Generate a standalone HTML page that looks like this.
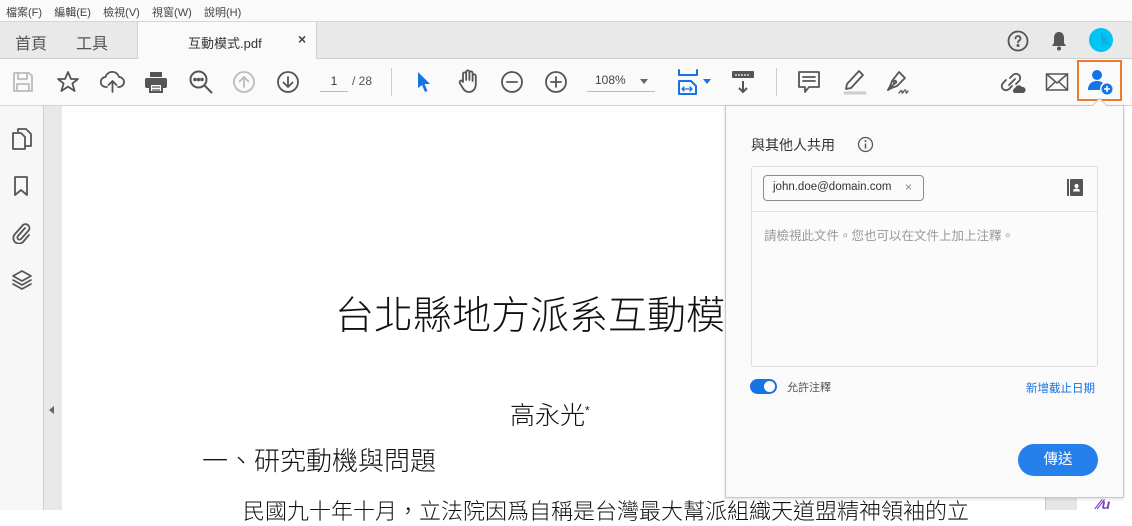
<!DOCTYPE html>
<html><head><meta charset="utf-8"><style>
*{margin:0;padding:0;box-sizing:border-box}
body{width:1132px;height:510px;overflow:hidden;background:#fff;font-family:"Liberation Sans","Noto Sans CJK TC",sans-serif;position:relative;color:#333}
.a{position:absolute}
svg.i{position:absolute;fill:none;stroke:#555;stroke-width:1.8;stroke-linecap:round;stroke-linejoin:round}
</style></head><body>
<!-- menu -->
<div class="a" style="left:0;top:0;width:1132px;height:22px;background:#fafafa;border-bottom:1px solid #d6d6d6"></div>
<div class="a" style="left:6px;top:4px;font-size:11px;color:#444;word-spacing:0">檔案(F)&nbsp;&nbsp;&nbsp;&nbsp;編輯(E)&nbsp;&nbsp;&nbsp;&nbsp;檢視(V)&nbsp;&nbsp;&nbsp;&nbsp;視窗(W)&nbsp;&nbsp;&nbsp;&nbsp;說明(H)</div>
<!-- tabs -->
<div class="a" style="left:0;top:22px;width:1132px;height:37px;background:#e9e9e9;border-bottom:1px solid #cfcfcf"></div>
<div class="a" style="left:15px;top:30px;font-size:16px;color:#555">首頁</div>
<div class="a" style="left:76px;top:30px;font-size:16px;color:#555">工具</div>
<div class="a" style="left:137px;top:22px;width:180px;height:37px;background:#fafafa;border-left:1px solid #cfcfcf;border-right:1px solid #cfcfcf"></div>
<div class="a" style="left:188px;top:33px;font-size:13px;color:#333">互動模式.pdf</div>
<div class="a" style="left:298px;top:31px;font-size:14px;color:#444;font-weight:bold">×</div>
<svg class="i" style="left:1006px;top:29px" width="24" height="24" viewBox="0 0 24 24"><circle cx="12" cy="12" r="9.5" stroke="#555"/><path d="M9.5 9.5a2.5 2.5 0 1 1 3.2 2.4c-.6.3-.7.8-.7 1.6"/><circle cx="12" cy="16.5" r=".6" fill="#555"/></svg>
<svg class="a" style="left:1050px;top:30px" width="18" height="22" viewBox="0 0 18 22"><path d="M9 2c-3.5 0-5 2.6-5 6v5l-2 3h14l-2-3V8c0-3.4-1.5-6-5-6z" fill="#555"/><circle cx="9" cy="18.5" r="2" fill="#555"/></svg>
<svg class="a" style="left:1088px;top:27px" width="26" height="26"><circle cx="13" cy="13" r="12" fill="#00c4f2"/><path d="M13 4 L22 18 L13 16z" fill="#1aa3d6" opacity=".7"/></svg>
<!-- toolbar -->
<div class="a" style="left:0;top:59px;width:1132px;height:47px;background:#fafafa;border-bottom:1px solid #d3d3d3"></div>
<svg class="i" style="left:12px;top:71px;stroke:#bbb" width="22" height="22" viewBox="0 0 22 22"><path d="M2 2h15l3 3v15H2z"/><path d="M6 2v6h9V2M5 20v-7h12v7"/></svg>
<svg class="i" style="left:56px;top:70px" width="24" height="24" viewBox="0 0 24 24"><path d="M12 2l3 7h7l-5.6 4.4 2.2 7.6L12 16.6 5.4 21l2.2-7.6L2 9h7z"/></svg>
<svg class="i" style="left:100px;top:70px" width="25" height="24" viewBox="0 0 25 24"><path d="M7 17H6a5 5 0 0 1-.5-10A7 7 0 0 1 19 7a5 5 0 0 1 0 10h-1"/><path d="M12.5 22V11M8.5 15l4-4 4 4"/></svg>
<svg class="a" style="left:144px;top:70px" width="24" height="24" viewBox="0 0 24 24"><rect x="6" y="2" width="12" height="5" fill="#555"/><rect x="1" y="8" width="22" height="10" rx="2" fill="#555"/><rect x="6" y="14" width="12" height="8" fill="#fff" stroke="#555" stroke-width="2"/><path d="M8 17h8M8 20h8" stroke="#555" stroke-width="1.2"/></svg>
<svg class="i" style="left:188px;top:69px;stroke-width:2" width="26" height="26" viewBox="0 0 26 26"><circle cx="10.5" cy="10.5" r="8"/><path d="M16.5 16.5l7 7"/><circle cx="7" cy="10.5" r=".8" fill="#555"/><circle cx="10.5" cy="10.5" r=".8" fill="#555"/><circle cx="14" cy="10.5" r=".8" fill="#555"/></svg>
<svg class="i" style="left:232px;top:70px;stroke:#bbb" width="24" height="24" viewBox="0 0 24 24"><circle cx="12" cy="12" r="10"/><path d="M12 17V7M7.5 11.5 12 7l4.5 4.5"/></svg>
<svg class="i" style="left:276px;top:70px" width="24" height="24" viewBox="0 0 24 24"><circle cx="12" cy="12" r="10"/><path d="M12 7v10M7.5 12.5 12 17l4.5-4.5"/></svg>
<div class="a" style="left:320px;top:74px;width:28px;border-bottom:1px solid #bbb;text-align:center;font-size:12px;color:#333;padding-bottom:3px">1</div>
<div class="a" style="left:352px;top:74px;font-size:12px;color:#555">/ 28</div>
<div class="a" style="left:391px;top:68px;width:1px;height:28px;background:#ccc"></div>
<svg class="a" style="left:416px;top:70px" width="16" height="24" viewBox="0 0 16 24"><path d="M2 2l12 12H8.5l3 7-2.5 1-3-7L2 18z" fill="#1473e6"/></svg>
<svg class="i" style="left:456px;top:68px" width="24" height="26" viewBox="0 0 24 26"><path d="M7 14V6a1.6 1.6 0 0 1 3.2 0v6V4a1.6 1.6 0 0 1 3.2 0v8V5a1.6 1.6 0 0 1 3.2 0v8V8a1.6 1.6 0 0 1 3.2 0v8c0 5-3 8-7 8-3 0-4.5-1.5-6-4l-3-5a1.6 1.6 0 0 1 2.8-1.6z"/></svg>
<svg class="i" style="left:500px;top:70px" width="24" height="24" viewBox="0 0 24 24"><circle cx="12" cy="12" r="10"/><path d="M7 12h10"/></svg>
<svg class="i" style="left:544px;top:70px" width="24" height="24" viewBox="0 0 24 24"><circle cx="12" cy="12" r="10"/><path d="M7 12h10M12 7v10"/></svg>
<div class="a" style="left:587px;top:73px;width:68px;border-bottom:1px solid #bbb;font-size:12px;color:#444;padding:0 0 4px 8px">108%</div>
<div class="a" style="left:640px;top:79px;border:4px solid transparent;border-top:5px solid #666"></div>
<svg class="i" style="left:676px;top:68px;stroke:#1473e6;stroke-width:2" width="24" height="28" viewBox="0 0 24 28"><path d="M3 2v5h18V2M3 26V13h12l5 5v8z"/><path d="M6 21h10M6 21l2-2M6 21l2 2M16 21l-2-2M16 21l-2 2" stroke-width="1.3"/></svg>
<div class="a" style="left:703px;top:79px;border:4px solid transparent;border-top:5px solid #1473e6"></div>
<svg class="a" style="left:731px;top:69px" width="24" height="26" viewBox="0 0 24 26"><rect x="1" y="2" width="22" height="7" rx="1" fill="#555"/><path d="M5 5v2M8 5v2M11 5v2M14 5v2M17 5v2" stroke="#fff" stroke-width="1.2"/><path d="M12 12v11M8 19l4 4 4-4" stroke="#555" stroke-width="2" fill="none"/></svg>
<div class="a" style="left:776px;top:68px;width:1px;height:28px;background:#ccc"></div>
<svg class="i" style="left:797px;top:70px" width="24" height="26" viewBox="0 0 24 26"><path d="M2 2h20v15H12l-4 5v-5H2z"/><path d="M6 7h12M6 11h12"/></svg>
<svg class="i" style="left:841px;top:68px" width="26" height="28" viewBox="0 0 26 28"><path d="M18 3l4 4-12 13-5 1 1-5z"/><path d="M4 25h20" stroke="#ccc" stroke-width="3"/></svg>
<svg class="i" style="left:884px;top:68px" width="28" height="28" viewBox="0 0 28 28"><path d="M15 4l6 6-8 8c-3 1-6 2-9 4 2-3 3-6 4-9z"/><path d="M4 22l6-6"/><circle cx="11" cy="14" r="1.3"/><path d="M15 25c2-3 3-3 3-1s1 1 2-1 2-1 2 1 1 1 2-1" stroke-width="1.3"/></svg>
<svg class="i" style="left:999px;top:69px" width="28" height="26" viewBox="0 0 28 26"><path d="M11 9l3-3a4 4 0 0 1 6 6l-3 3M13 17l-3 3a4 4 0 0 1-6-6l3-3M10 16l6-6"/><path d="M15 24a3 3 0 0 1 1-5 4 4 0 0 1 7-1 3 3 0 0 1 1 6z" fill="#555" stroke="none"/></svg>
<svg class="i" style="left:1045px;top:72px;stroke-width:1.5" width="24" height="20" viewBox="0 0 24 20"><rect x="1.5" y="2" width="21" height="16"/><path d="M1.5 2l10.5 9 10.5-9M1.5 18l8-7.5M22.5 18l-8-7.5"/></svg>
<div class="a" style="left:1077px;top:60px;width:45px;height:41px;border:2px solid #ec7a2c"></div>
<svg class="a" style="left:1087px;top:68px" width="28" height="28" viewBox="0 0 28 28"><circle cx="10" cy="7" r="5" fill="#1473e6"/><path d="M1 22c0-6 4-9 9-9 3 0 5 1 6 2-2 1.5-3 3.5-3 7z" fill="#1473e6"/><circle cx="20" cy="21" r="5.5" fill="#1473e6"/><path d="M20 18v6M17 21h6" stroke="#fff" stroke-width="1.6"/></svg>
<!-- sidebar -->
<div class="a" style="left:0;top:106px;width:44px;height:404px;background:#f7f7f7;border-right:1px solid #cfcfcf"></div>
<div class="a" style="left:44px;top:106px;width:18px;height:404px;background:#e8e8e8"></div>
<div class="a" style="left:49px;top:406px;border:4px solid transparent;border-right:5px solid #666;border-left:0"></div>
<svg class="i" style="left:11px;top:127px" width="22" height="24" viewBox="0 0 22 24"><path d="M7 5V2h8l5 5v12h-5"/><path d="M2 6h8l4 4v12H2z"/></svg>
<svg class="i" style="left:13px;top:175px" width="16" height="22" viewBox="0 0 16 22"><path d="M2 2h12v18l-6-5-6 5z"/></svg>
<svg class="i" style="left:10px;top:220px" width="22" height="24" viewBox="0 0 22 24"><path d="M15 8l-7 8a2 2 0 0 0 3 3l8-9a4 4 0 0 0-6-5L5 14a5.5 5.5 0 0 0 8 8l6-7"/></svg>
<svg class="i" style="left:10px;top:268px;stroke-width:1.6" width="24" height="24" viewBox="0 0 24 24"><path d="M12 3l9 5-9 5-9-5z"/><path d="M3 12l9 5 9-5M3 16l9 5 9-5"/></svg>
<!-- document -->
<div class="a" style="left:335px;top:285px;font-size:39px;color:#111;white-space:nowrap;font-family:'Liberation Sans','Noto Sans CJK TC',sans-serif;font-weight:300">台北縣地方派系互動模</div>
<div class="a" style="left:510px;top:396px;font-size:25px;color:#111;font-weight:300">高永光<sup style="font-size:12px">*</sup></div>
<div class="a" style="left:202px;top:441px;font-size:26px;color:#111;font-weight:300;white-space:nowrap">一、研究動機與問題</div>
<div class="a" style="left:243px;top:494px;font-size:22px;color:#111;font-weight:300;white-space:nowrap">民國九十年十月，立法院因爲自稱是台灣最大幫派組織天道盟精神領袖的立</div>
<div class="a" style="left:1045px;top:497px;width:32px;height:13px;background:#e6e6e6;border-left:1px solid #ccc"></div>
<div class="a" style="left:1097px;top:496px;font-size:14px;color:#7b3fc4;font-style:italic;font-weight:bold">∕∕u</div>
<!-- panel -->
<div class="a" style="left:725px;top:105px;width:399px;height:393px;background:#fafafa;border:1px solid #c8c8c8;box-shadow:0 1px 3px rgba(0,0,0,.15)"></div>
<div class="a" style="left:1094px;top:100px;width:11px;height:11px;background:#fafafa;border-left:1px solid #c8c8c8;border-top:1px solid #c8c8c8;transform:rotate(45deg)"></div>
<div class="a" style="left:751px;top:135px;font-size:14px;color:#333">與其他人共用</div>
<svg class="a" style="left:857px;top:136px" width="17" height="17"><circle cx="8.5" cy="8.5" r="7" fill="none" stroke="#555" stroke-width="1.3"/><path d="M8.5 7.5v5" stroke="#555" stroke-width="1.5"/><circle cx="8.5" cy="5" r="1" fill="#555"/></svg>
<div class="a" style="left:751px;top:166px;width:347px;height:201px;background:#fbfbfb;border:1px solid #dedede;border-radius:3px"></div>
<div class="a" style="left:752px;top:211px;width:345px;height:1px;background:#e2e2e2"></div>
<div class="a" style="left:763px;top:175px;width:161px;height:26px;border:1px solid #8a8a8a;border-radius:4px;background:#fafafa"></div>
<div class="a" style="left:773px;top:181px;font-size:11.5px;color:#333">john.doe@domain.com</div>
<div class="a" style="left:905px;top:180px;font-size:12px;color:#888">×</div>
<svg class="a" style="left:1067px;top:179px" width="16" height="17"><rect x="0" y="0" width="2" height="17" fill="#555"/><rect x="3" y="0" width="13" height="17" rx="1" fill="#555"/><circle cx="9.5" cy="7" r="2" fill="#fff"/><path d="M6 12.5c0-2 1.5-3 3.5-3s3.5 1 3.5 3z" fill="#fff"/></svg>
<div class="a" style="left:764px;top:225px;font-size:12.5px;color:#999;white-space:nowrap">請檢視此文件。您也可以在文件上加上注釋。</div>
<div class="a" style="left:750px;top:379px;width:27px;height:15px;border-radius:8px;background:#1473e6"></div>
<div class="a" style="left:764px;top:381px;width:11px;height:11px;border-radius:50%;background:#fff"></div>
<div class="a" style="left:787px;top:379px;font-size:11px;color:#555">允許注釋</div>
<div class="a" style="left:1026px;top:380px;font-size:11.5px;color:#1473e6;white-space:nowrap">新增截止日期</div>
<div class="a" style="left:1018px;top:444px;width:80px;height:32px;border-radius:16px;background:#2680eb;color:#fff;font-size:14.5px;text-align:center;line-height:32px">傳送</div>
</body></html>
